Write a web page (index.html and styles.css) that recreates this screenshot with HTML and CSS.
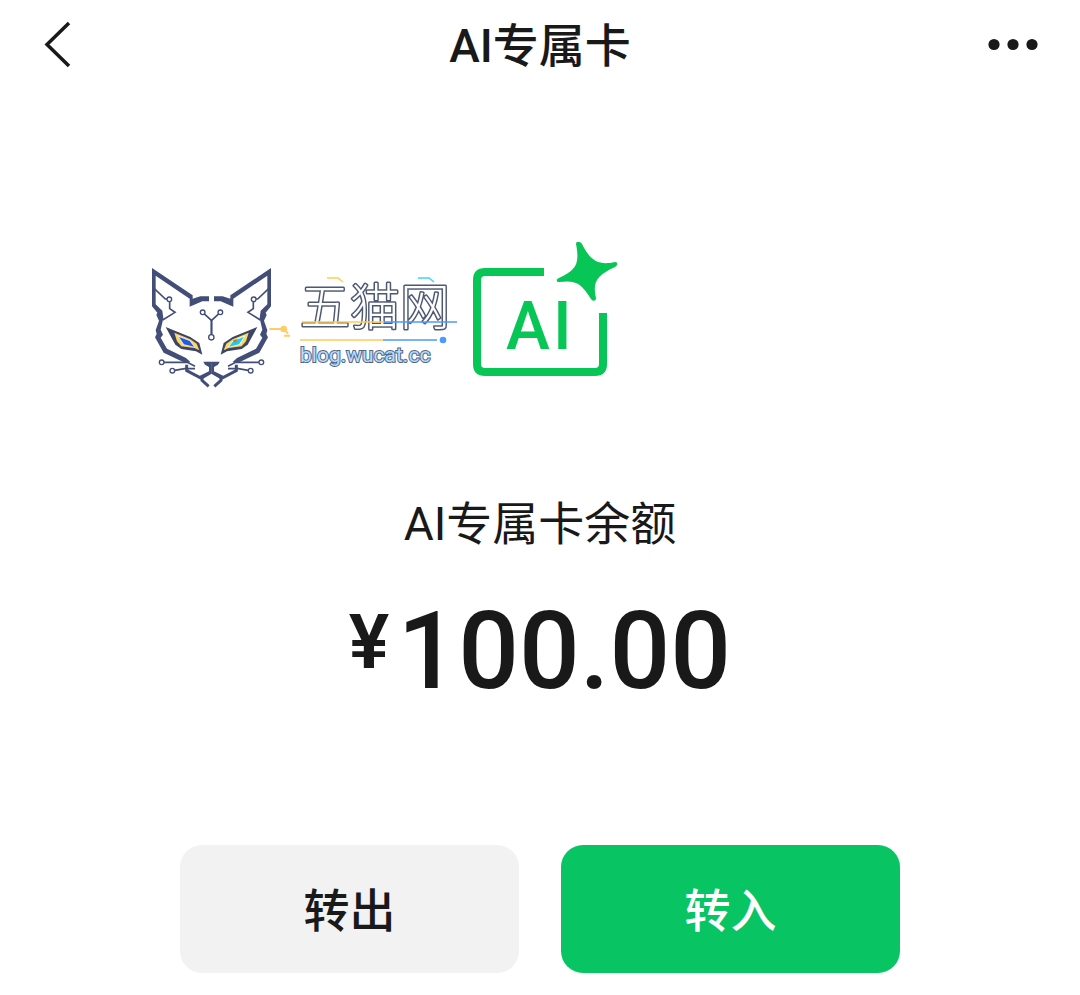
FILE: index.html
```html
<!DOCTYPE html>
<html lang="zh-CN">
<head>
  <meta charset="UTF-8" />
  <meta name="viewport" content="width=device-width, initial-scale=1" />
  <title>AI专属卡</title>
  <link rel="stylesheet" href="styles.css">
</head>
<body>
  <header class="header">
    <button class="icon-btn" type="button" aria-label="返回">
      <svg width="30" height="50" viewBox="0 0 30 50" fill="none" stroke="currentColor" stroke-width="3.500">
        <path d="M27 3L5 24.500L27 46" />
      </svg>
    </button>
    <h1>AI专属卡</h1>
    <button class="icon-btn more" type="button" aria-label="更多">
      <svg width="50" height="50" viewBox="0 0 50 50" fill="currentColor">
        <circle cx="6" cy="24.500" r="5.600" />
        <circle cx="25" cy="24.500" r="5.600" />
        <circle cx="44" cy="24.500" r="5.600" />
      </svg>
    </button>
  </header>

  <main class="card">
    <div class="brand">
      <div class="watermark">
        <!-- Cat logo -->
        <svg class="cat" width="150" height="140" viewBox="0 0 450 420" fill="none">
          <defs>
            <g id="half">
              <path d="M36 39L158 121V131L181 124H207V139H187L149 155V131L47 62V148L67 167L70 190L62 224L69 239L62 248L81 281L138 309L151 321L144 324L128 320L71 293L45 247L50 237L47 226L57 197L49 180L52 173L36 154Z" fill="#424e77" />
              <path d="M77 216L151 246L178 264L187 299L168 289L124 282L106 269L90 240Z" fill="#3c4566" />
              <path d="M190 320H215V356L188 372L172 366L207 349V336L195 329Z" fill="#424e77" />
              <path d="M140 329V347L186 371V376L206 394" stroke="#424e77" stroke-width="9" />
              <g stroke="#424e77" stroke-width="5">
                <path d="M43 101L76 132H83M89 138V161L105 172L68 195" />
                <path d="M192 176L215 197V240M72 322H142L165 334M104 346L134 341H165" />
                <g fill="#fff" stroke-width="4">
                  <circle cx="88" cy="133" r="7" />
                  <circle cx="188" cy="172" r="7" />
                  <circle cx="65" cy="322" r="7" />
                  <circle cx="97" cy="347" r="7" />
                </g>
              </g>
            </g>
          </defs>
          <use href="#half" />
          <use href="#half" transform="translate(429 0) scale(-1 1)" />
          <circle cx="214" cy="247" r="8" fill="#fff" stroke="#424e77" stroke-width="4" />
          <path d="M103 233L151 253L170 266L178 286L163 279L124 274L111 259Z" fill="#ffd65c" />
          <path d="M112 241L150 256L166 277L128 269Z" fill="#dfeaff" />
          <path d="M117 246L149 258L162 275L132 268Z" fill="#2359de" />
          <path d="M326 233L278 253L259 266L251 286L266 279L305 274L318 259Z" fill="#ffd65c" />
          <path d="M317 241L279 256L263 277L301 269Z" fill="#dffcff" />
          <path d="M312 246L280 258L267 275L297 268Z" fill="#28c9ee" />
          <path d="M278 256L293 252L287 265Z" fill="#a88745" />
          <path d="M388 222H427M431 222L444 236M432 242H450" stroke="#fc6" stroke-width="6" />
          <circle cx="431" cy="222" r="10" fill="#fc6" />
        </svg>

        <!-- Site name -->
        <svg class="wordmark" width="170" height="120" viewBox="0 0 170 120" fill="none">
          <text class="site-name" x="10" y="60">五猫网</text>
          <text class="site-url" x="10" y="97">blog.wucat.cc</text>
          <g stroke-width="1.600">
            <path d="M37 13H48L53 17M12 57H94M10 75H93" stroke="#fc5" />
            <path d="M94 57H167M93 75H147" stroke="#4d9bff" />
            <path d="M128 13H139L144 17" stroke="#43d3f7" />
          </g>
          <circle cx="153" cy="75" r="3.300" fill="#4d9bff" />
        </svg>
      </div>

      <!-- AI card -->
      <svg class="ai-icon" width="134" height="180" viewBox="0 0 134 180">
        <path d="M71 37H12Q4 37 4 45V129Q4 137 12 137H122Q130 137 130 129V78" fill="none" stroke="#07c656" stroke-width="8" />
        <path d="M103 9C103 6 107 6 109 9C117 25 125 31 142 27C145 27 145 30 142 32C125 40 119 46 123 63C123 66 120 67 118 64C108 48 103 45 86 47C83 47 83 44 86 43C103 35 107 29 103 9Z" fill="#07c656" />
        <text class="ai-text" x="33 80" y="114">AI</text>
      </svg>
    </div>

    <p class="label">AI专属卡余额</p>
    <p class="amount"><span class="currency">¥</span><span>100.00</span></p>

    <div class="actions">
      <button class="btn btn-out" type="button">转出</button>
      <button class="btn btn-in" type="button">转入</button>
    </div>
  </main>
</body>
</html>
```
FILE: styles.css
```css
:root {
  --text: #191919;
  --green: #09c463;
  --gray: #f2f2f2;
}

* {
  margin: 0;
  padding: 0;
  box-sizing: border-box;
}

body {
  font-family: Roboto, "Noto Sans CJK SC", sans-serif;
  background: #fff;
  color: var(--text);
}

svg {
  display: block;
}

button {
  border: none;
  font-family: inherit;
  color: inherit;
  cursor: pointer;
}

.header {
  display: grid;
  grid-template-columns: 1fr auto 1fr;
  align-items: center;
  height: 90px;
  padding: 0 42px;
}

.header h1 {
  padding-top: 2px;
  font-size: 46px;
  line-height: 60px;
  font-weight: 500;
}

.icon-btn {
  justify-self: start;
  background: none;
}

.more {
  justify-self: end;
}

.card {
  padding: 145px 24px 22px;
  text-align: center;
}

.brand {
  display: grid;
  grid-template-columns: 1fr auto 1fr;
  align-items: center;
  column-gap: 13px;
}

.watermark {
  display: flex;
  justify-self: end;
  align-items: center;
}

.site-name {
  font-family: "Noto Sans CJK SC", sans-serif;
  font-size: 50px;
  font-weight: 300;
  fill: #fff;
  stroke: #4f5873;
  stroke-width: 3px;
  stroke-linejoin: round;
  paint-order: stroke;
}

.site-url {
  font-size: 21px;
  fill: #b5dcff;
  stroke: #536785;
  stroke-width: 2px;
  paint-order: stroke;
}

.ai-icon {
  overflow: visible;
}

.ai-text {
  font-size: 66px;
  font-weight: 500;
  fill: #07c656;
}

.label {
  margin-top: 79px;
  font-size: 46px;
  line-height: 60px;
}

.amount {
  display: flex;
  justify-content: center;
  gap: 8px;
  margin-top: 38px;
  font-size: 107px;
  line-height: 120px;
  font-weight: 500;
}

.currency {
  font-size: 76px;
  line-height: 100px;
  font-weight: 600;
}

.actions {
  display: grid;
  grid-template-columns: 1fr 1fr;
  gap: 42px;
  max-width: 720px;
  margin: 133px auto 0;
}

.btn {
  height: 128px;
  padding-top: 4px;
  border-radius: 22px;
  font-size: 46px;
  line-height: 60px;
  font-weight: 500;
}

.btn-out {
  background: var(--gray);
}

.btn-in {
  background: var(--green);
  color: #fff;
}
```
